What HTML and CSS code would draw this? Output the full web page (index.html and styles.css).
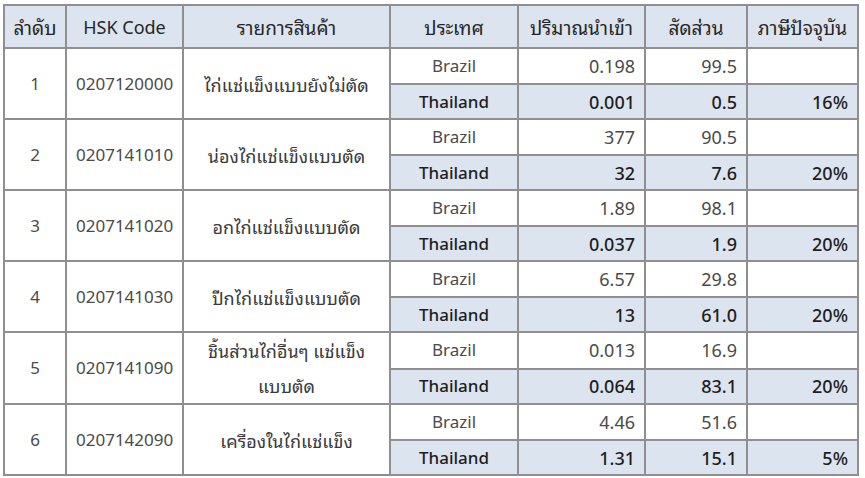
FILE: index.html
```html
<!DOCTYPE html>
<html lang="th">
<head>
<meta charset="utf-8">
<title>HSK</title>
<link rel="stylesheet" href="styles.css">
</head>
<body>
<div class="wrap">
<table class="grid">
  <colgroup>
    <col class="c1"><col class="c2"><col class="c3"><col class="c4"><col class="c5"><col class="c6"><col class="c7">
  </colgroup>
  <thead>
    <tr class="head">
      <th class="thai">ลำดับ</th><th>HSK Code</th><th class="thai">รายการสินค้า</th><th class="thai">ประเทศ</th><th class="thai">ปริมาณนำเข้า</th><th class="thai">สัดส่วน</th><th class="thai">ภาษีปัจจุบัน</th>
    </tr>
  </thead>
  <tbody>
    <tr class="br"><td rowspan="2" class="ctr">1</td><td rowspan="2" class="ctr">0207120000</td><td rowspan="2" class="ctr name thai">ไก่แช่แข็งแบบยังไม่ตัด</td><td class="ctr">Brazil</td><td class="num">0.198</td><td class="num">99.5</td><td class="num"></td></tr>
    <tr class="th"><td class="ctr">Thailand</td><td class="num">0.001</td><td class="num">0.5</td><td class="num">16%</td></tr>

    <tr class="br"><td rowspan="2" class="ctr">2</td><td rowspan="2" class="ctr">0207141010</td><td rowspan="2" class="ctr name thai">น่องไก่แช่แข็งแบบตัด</td><td class="ctr">Brazil</td><td class="num">377</td><td class="num">90.5</td><td class="num"></td></tr>
    <tr class="th"><td class="ctr">Thailand</td><td class="num">32</td><td class="num">7.6</td><td class="num">20%</td></tr>

    <tr class="br"><td rowspan="2" class="ctr">3</td><td rowspan="2" class="ctr">0207141020</td><td rowspan="2" class="ctr name thai">อกไก่แช่แข็งแบบตัด</td><td class="ctr">Brazil</td><td class="num">1.89</td><td class="num">98.1</td><td class="num"></td></tr>
    <tr class="th"><td class="ctr">Thailand</td><td class="num">0.037</td><td class="num">1.9</td><td class="num">20%</td></tr>

    <tr class="br"><td rowspan="2" class="ctr">4</td><td rowspan="2" class="ctr">0207141030</td><td rowspan="2" class="ctr name thai">ปีกไก่แช่แข็งแบบตัด</td><td class="ctr">Brazil</td><td class="num">6.57</td><td class="num">29.8</td><td class="num"></td></tr>
    <tr class="th"><td class="ctr">Thailand</td><td class="num">13</td><td class="num">61.0</td><td class="num">20%</td></tr>

    <tr class="br"><td rowspan="2" class="ctr">5</td><td rowspan="2" class="ctr">0207141090</td><td rowspan="2" class="ctr name thai two">ชิ้นส่วนไก่อื่นๆ แช่แข็ง<br>แบบตัด</td><td class="ctr">Brazil</td><td class="num">0.013</td><td class="num">16.9</td><td class="num"></td></tr>
    <tr class="th"><td class="ctr">Thailand</td><td class="num">0.064</td><td class="num">83.1</td><td class="num">20%</td></tr>

    <tr class="br"><td rowspan="2" class="ctr">6</td><td rowspan="2" class="ctr">0207142090</td><td rowspan="2" class="ctr name thai">เครื่องในไก่แช่แข็ง</td><td class="ctr">Brazil</td><td class="num">4.46</td><td class="num">51.6</td><td class="num"></td></tr>
    <tr class="th"><td class="ctr">Thailand</td><td class="num">1.31</td><td class="num">15.1</td><td class="num">5%</td></tr>
  </tbody>
</table>
</div>
</body>
</html>
```

FILE: styles.css
```css
html, body {
  margin: 0;
  padding: 0;
  background: #ffffff;
}
.wrap {
  padding: 4px 0 0 3px;
}
.grid {
  border-collapse: collapse;
  table-layout: fixed;
  width: 854px;
  font-family: "Noto Sans", "Noto Sans Thai Looped", "Noto Sans Thai", "DejaVu Sans", sans-serif;
  font-size: 17px;
  color: #4a4a4a;
}
.c1 { width: 62px; }
.c2 { width: 117px; }
.c3 { width: 207px; }
.c4 { width: 128px; }
.c5 { width: 127px; }
.c6 { width: 102px; }
.c7 { width: 111px; }
.grid th, .grid td {
  border: 2px solid #8f8f8f;
  padding: 0 9px;
  line-height: 20px;
  white-space: nowrap;
}
.grid th {
  font-weight: normal;
  background: #dce4ef;
  color: #262626;
  height: 41px;
  text-align: center;
  font-size: 18px;
}
.head th { padding: 0; }
.grid .thai {
  font-family: "Noto Sans Thai Looped", "Noto Serif Thai", "Noto Sans Thai", "Noto Sans", sans-serif;
  font-size: 18px;
}
.grid th.thai { font-size: 19px; }
.br td { height: 34px; }
.th td { height: 33px; }
.grid .num { font-size: 18px; }
.th td:not([rowspan]) {
  background: #dce4ef;
  color: #1e1e1e;
  font-weight: 500;
}
.ctr { text-align: center; }
.num { text-align: right; }
.grid .name { padding: 0 4px; color: #3a3a3a; }
.grid td.two { line-height: 35px; }
```
